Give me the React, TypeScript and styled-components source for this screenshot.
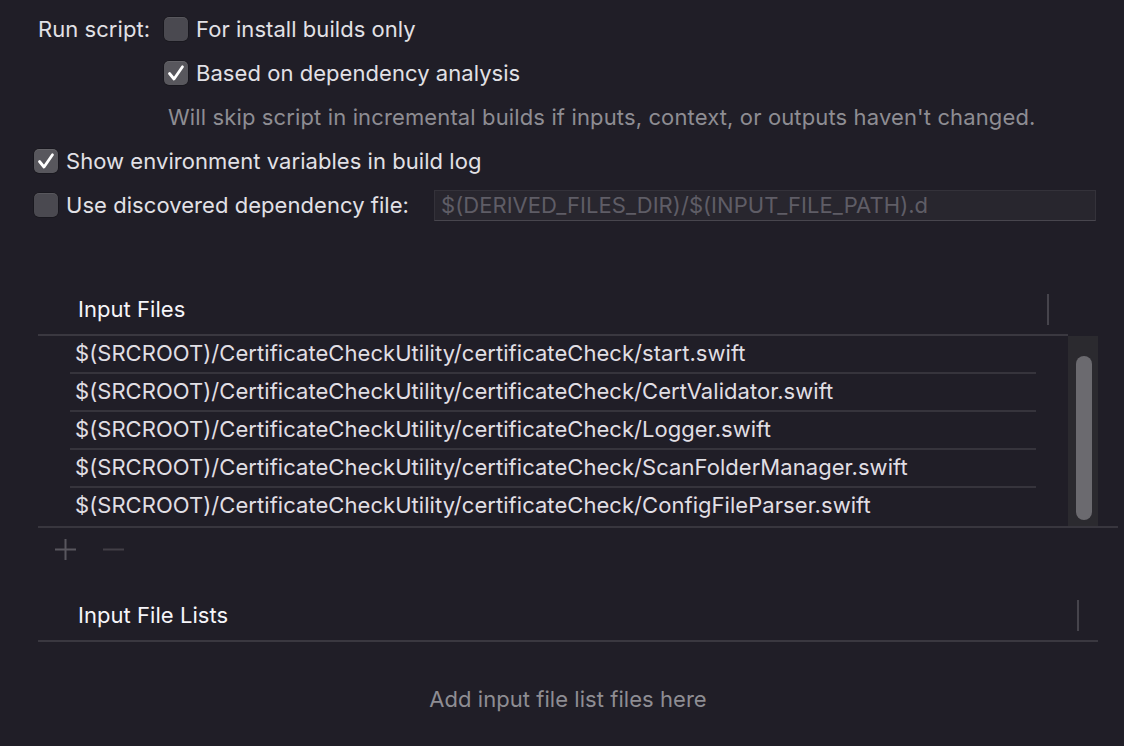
import React from "react";
import styled, { createGlobalStyle } from "styled-components";

const Global = createGlobalStyle`
  html, body {
    margin: 0;
    padding: 0;
    background: #201e27;
  }
  body {
    font-family: Inter, "Liberation Sans", sans-serif;
    -webkit-font-smoothing: antialiased;
  }
`;

const Page = styled.div`
  width: 1124px;
  height: 746px;
  overflow: hidden;
  box-sizing: border-box;
  padding-top: 7px;
  display: flex;
  flex-direction: column;
  color: #e2e1e6;
  font-size: 22px;
  letter-spacing: 0.05px;
  background: #201e27;
  & > * {
    flex: none;
  }
`;

const OptionRow = styled.div<{ $indent: number }>`
  height: 44px;
  display: flex;
  align-items: center;
  padding-left: ${(p) => p.$indent}px;
  padding-right: 28px;
  box-sizing: border-box;
`;

const RowLabel = styled.span`
  width: 126px;
  flex: none;
`;

const CheckGroup = styled.label`
  display: flex;
  align-items: center;
  gap: 8px;
  white-space: nowrap;
`;

const Box = styled.span<{ $checked: boolean }>`
  width: 24px;
  height: 24px;
  flex: none;
  box-sizing: border-box;
  border-radius: 5px;
  background: ${(p) => (p.$checked ? "#58575d" : "#4a4950")};
  box-shadow: inset 0 1px 0 rgba(255, 255, 255, 0.08), 0 0 0 0.5px rgba(0, 0, 0, 0.4);
  display: flex;
  align-items: center;
  justify-content: center;
`;

const Hint = styled.span`
  color: #8e8d93;
  white-space: nowrap;
  letter-spacing: 0.13px;
`;

const PathField = styled.div`
  margin-left: auto;
  width: 662px;
  height: 31px;
  box-sizing: border-box;
  background: #28262e;
  border: 1px solid #34323a;
  border-bottom-color: #48464e;
  color: #5f5d66;
  padding-left: 6px;
  display: flex;
  align-items: center;
  white-space: nowrap;
`;

const Section = styled.section<{ $top: number; $width: number }>`
  margin-top: ${(p) => p.$top}px;
  margin-left: 38px;
  width: ${(p) => p.$width}px;
  display: flex;
  flex-direction: column;
  & > * {
    flex: none;
  }
`;

const TableHeader = styled.div<{ $width: number }>`
  width: ${(p) => p.$width}px;
  height: 52px;
  box-sizing: border-box;
  border-bottom: 2px solid #3a3840;
  display: flex;
  align-items: center;
  padding-left: 40px;
  color: #f6f5f9;
`;

const ColumnDivider = styled.span`
  margin-left: auto;
  margin-right: 19px;
  width: 2px;
  height: 31px;
  background: #46444c;
`;

const TableBody = styled.div`
  display: flex;
  width: 1060px;
`;

const FileList = styled.div`
  width: 1030px;
  display: flex;
  flex-direction: column;
`;

const FileRow = styled.div`
  height: 38px;
  padding: 0 32px;
  display: flex;
`;

const FileCell = styled.div<{ $last: boolean }>`
  flex: 1;
  display: flex;
  align-items: center;
  padding-left: 5px;
  padding-bottom: 2px;
  box-sizing: border-box;
  border-bottom: 2px solid ${(p) => (p.$last ? "transparent" : "#36343c")};
  color: #e0dfe4;
  white-space: nowrap;
`;

const ScrollTrack = styled.div`
  width: 30px;
  box-sizing: border-box;
  padding: 20px 6px 6px 8px;
  background: #2b2a2f;
  display: flex;
`;

const ScrollThumb = styled.div`
  flex: 1;
  border-radius: 8px;
  background: #6b6a6f;
`;

const Toolbar = styled.div`
  width: 1080px;
  height: 44px;
  box-sizing: border-box;
  border-top: 2px solid #38363e;
  display: flex;
  align-items: center;
  padding-left: 17px;
  gap: 27px;
`;

const ToolButton = styled.span`
  width: 21px;
  height: 21px;
  display: flex;
  align-items: center;
  justify-content: center;
`;

const EmptyArea = styled.div`
  height: 120px;
  padding-top: 45px;
  box-sizing: border-box;
  text-align: center;
  color: #8e8d93;
  line-height: 24px;
`;

const Checkbox = ({ checked, children }: { checked: boolean; children: React.ReactNode }) => (
  <CheckGroup>
    <Box $checked={checked}>
      {checked && (
        <svg width="24" height="24" viewBox="0 0 24 24">
          <path d="M5.5 12.5 L10 18 L18.5 5.8" fill="none" stroke="#ffffff" strokeWidth="2.8" strokeLinecap="round" strokeLinejoin="round" />
        </svg>
      )}
    </Box>
    <span>{children}</span>
  </CheckGroup>
);

const files = [
  "$(SRCROOT)/CertificateCheckUtility/certificateCheck/start.swift",
  "$(SRCROOT)/CertificateCheckUtility/certificateCheck/CertValidator.swift",
  "$(SRCROOT)/CertificateCheckUtility/certificateCheck/Logger.swift",
  "$(SRCROOT)/CertificateCheckUtility/certificateCheck/ScanFolderManager.swift",
  "$(SRCROOT)/CertificateCheckUtility/certificateCheck/ConfigFileParser.swift",
];

export default function App() {
  return (
    <>
      <Global />
      <Page>
        <OptionRow $indent={38}>
          <RowLabel>Run script:</RowLabel>
          <Checkbox checked={false}>For install builds only</Checkbox>
        </OptionRow>
        <OptionRow $indent={164}>
          <Checkbox checked>Based on dependency analysis</Checkbox>
        </OptionRow>
        <OptionRow $indent={168}>
          <Hint>Will skip script in incremental builds if inputs, context, or outputs haven't changed.</Hint>
        </OptionRow>
        <OptionRow $indent={34}>
          <Checkbox checked>Show environment variables in build log</Checkbox>
        </OptionRow>
        <OptionRow $indent={34}>
          <Checkbox checked={false}>Use discovered dependency file:</Checkbox>
          <PathField>$(DERIVED_FILES_DIR)/$(INPUT_FILE_PATH).d</PathField>
        </OptionRow>

        <Section $top={57} $width={1080}>
          <TableHeader $width={1030}>
            Input Files
            <ColumnDivider />
          </TableHeader>
          <TableBody>
            <FileList>
              {files.map((f, i) => (
                <FileRow key={f}>
                  <FileCell $last={i === files.length - 1}>{f}</FileCell>
                </FileRow>
              ))}
            </FileList>
            <ScrollTrack>
              <ScrollThumb />
            </ScrollTrack>
          </TableBody>
          <Toolbar>
            <ToolButton>
              <svg width="21" height="21" viewBox="0 0 21 21">
                <path d="M10.5 0 V21 M0 10.5 H21" stroke="#58565e" strokeWidth="2" fill="none" />
              </svg>
            </ToolButton>
            <ToolButton>
              <svg width="21" height="21" viewBox="0 0 21 21">
                <path d="M0 10.5 H21" stroke="#423f47" strokeWidth="2" fill="none" />
              </svg>
            </ToolButton>
          </Toolbar>
        </Section>

        <Section $top={20} $width={1060}>
          <TableHeader $width={1060}>
            Input File Lists
            <ColumnDivider />
          </TableHeader>
          <EmptyArea>Add input file list files here</EmptyArea>
        </Section>
      </Page>
    </>
  );
}
